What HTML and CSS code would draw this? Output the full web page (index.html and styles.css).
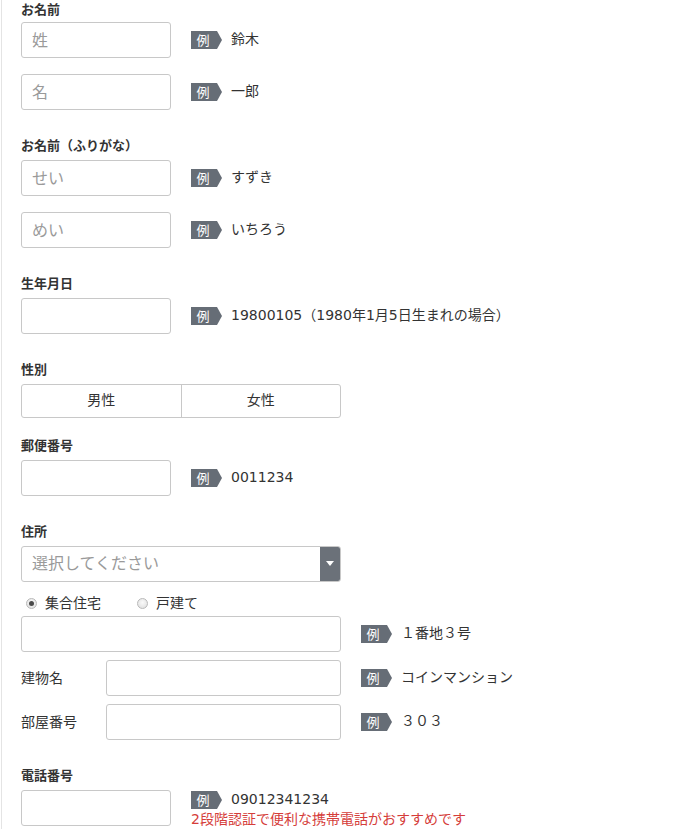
FILE: index.html
```html
<!DOCTYPE html>
<html lang="ja">
<head>
<meta charset="utf-8">
<link rel="stylesheet" href="styles.css">
</head>
<body>
<div class="page">
  <div class="group first">
    <div class="label">お名前</div>
    <div class="rows">
      <div class="row"><input class="field" placeholder="姓"><span class="ex">例</span><span class="hint">鈴木</span></div>
      <div class="row"><input class="field" placeholder="名"><span class="ex">例</span><span class="hint">一郎</span></div>
    </div>
  </div>
  <div class="group">
    <div class="label">お名前（ふりがな）</div>
    <div class="rows">
      <div class="row"><input class="field" placeholder="せい"><span class="ex">例</span><span class="hint">すずき</span></div>
      <div class="row"><input class="field" placeholder="めい"><span class="ex">例</span><span class="hint">いちろう</span></div>
    </div>
  </div>
  <div class="group">
    <div class="label">生年月日</div>
    <div class="row"><input class="field"><span class="ex">例</span><span class="hint">19800105（1980年1月5日生まれの場合）</span></div>
  </div>
  <div class="group gender">
    <div class="label">性別</div>
    <div class="seg"><span class="seg-btn">男性</span><span class="seg-btn">女性</span></div>
  </div>
  <div class="group">
    <div class="label">郵便番号</div>
    <div class="row"><input class="field"><span class="ex">例</span><span class="hint">0011234</span></div>
  </div>
  <div class="group">
    <div class="label">住所</div>
    <div class="select"><span class="select-text">選択してください</span><span class="select-arrow"></span></div>
    <div class="radios">
      <span class="radio checked"></span><span class="radio-text">集合住宅</span>
      <span class="radio"></span><span class="radio-text">戸建て</span>
    </div>
    <div class="rows tight">
      <div class="row"><input class="field wide"><span class="ex">例</span><span class="hint">１番地３号</span></div>
      <div class="row"><span class="sublabel">建物名</span><input class="field sub"><span class="ex">例</span><span class="hint">コインマンション</span></div>
      <div class="row"><span class="sublabel">部屋番号</span><input class="field sub"><span class="ex">例</span><span class="hint">３０３</span></div>
    </div>
  </div>
  <div class="group">
    <div class="label">電話番号</div>
    <div class="row top"><input class="field"><div class="hints"><div class="hint-line"><span class="ex">例</span><span class="hint">09012341234</span></div><div class="note">2段階認証で便利な携帯電話がおすすめです</div></div></div>
  </div>
</div>
</body>
</html>
```
FILE: styles.css
```css
html, body {
  margin: 0;
  padding: 0;
  background: #fff;
}
body {
  font-family: "Noto Sans CJK JP", "Noto Sans", sans-serif;
  color: #333;
  height: 829px;
  overflow: hidden;
}
.page {
  margin-left: 1px;
  border-left: 1px solid #e4e4e4;
  padding-left: 19px;
  padding-top: 1px;
  min-height: 829px;
}
.group {
  margin-bottom: 27px;
}
.group.gender {
  margin-bottom: 19px;
}
.label {
  font-size: 13px;
  font-weight: bold;
  line-height: 16px;
  height: 16px;
  margin-bottom: 7px;
  color: #333;
}
.first .label {
  margin-bottom: 5px;
}
.rows {
  display: flex;
  flex-direction: column;
  gap: 16px;
}
.rows.tight {
  gap: 8px;
}
.row {
  display: flex;
  align-items: center;
}
.row.top {
  align-items: flex-start;
}
.field {
  box-sizing: border-box;
  width: 150px;
  height: 36px;
  border: 1px solid #c8c8c8;
  border-radius: 3px;
  padding: 0 10px 2px;
  font-family: inherit;
  font-size: 16px;
  color: #333;
  background: #fff;
  outline: none;
  margin: 0;
  flex: none;
}
.field::placeholder {
  color: #9a9a9a;
}
.field.wide {
  width: 320px;
}
.field.sub {
  width: 235px;
}
.sublabel {
  width: 85px;
  font-size: 14px;
  line-height: 20px;
  padding-bottom: 3px;
  flex: none;
}
.ex {
  position: relative;
  flex: none;
  box-sizing: border-box;
  width: 26px;
  height: 18px;
  margin-left: 20px;
  margin-right: 14px;
  background: #666d76;
  color: #fff;
  font-size: 13px;
  line-height: 17px;
  text-align: center;
  padding-right: 2px;
}
.ex::after {
  content: "";
  position: absolute;
  left: 26px;
  top: 0;
  border-top: 9px solid transparent;
  border-bottom: 9px solid transparent;
  border-left: 5px solid #666d76;
}
.hint {
  font-family: "DejaVu Sans", "Noto Sans CJK JP", sans-serif;
  font-size: 14px;
  line-height: 20px;
  padding-bottom: 3px;
  color: #333;
  white-space: nowrap;
}
.hints {
  display: flex;
  flex-direction: column;
}
.hint-line {
  display: flex;
  align-items: center;
  height: 20px;
}
.hint-line .hint {
  padding-bottom: 2px;
}
.note {
  margin-left: 20px;
  font-family: "DejaVu Sans", "Noto Sans CJK JP", sans-serif;
  font-size: 14px;
  line-height: 18px;
  color: #d53d3a;
  white-space: nowrap;
}
.seg {
  display: flex;
  box-sizing: border-box;
  width: 320px;
  height: 34px;
  border: 1px solid #c8c8c8;
  border-radius: 3px;
}
.seg-btn {
  flex: 1;
  display: flex;
  align-items: center;
  justify-content: center;
  font-size: 14px;
  padding-bottom: 4px;
  color: #333;
}
.seg-btn + .seg-btn {
  border-left: 1px solid #c8c8c8;
}
.select {
  display: flex;
  box-sizing: border-box;
  width: 320px;
  height: 36px;
  border: 1px solid #c8c8c8;
  border-radius: 3px;
  overflow: hidden;
}
.select-text {
  flex: 1;
  display: flex;
  align-items: center;
  padding-left: 10px;
  padding-bottom: 4px;
  font-size: 16px;
  color: #9a9a9a;
}
.select-arrow {
  position: relative;
  width: 20px;
  background: #6b7179;
}
.select-arrow::after {
  content: "";
  position: absolute;
  left: 6px;
  top: 14px;
  border-left: 4px solid transparent;
  border-right: 4px solid transparent;
  border-top: 5px solid #fff;
}
.radios {
  display: flex;
  align-items: center;
  height: 20px;
  margin-top: 11px;
  margin-bottom: 3px;
  padding-left: 5px;
}
.radio {
  box-sizing: border-box;
  width: 11px;
  height: 11px;
  border-radius: 50%;
  border: 1px solid #b9b9b9;
  background: radial-gradient(circle at 50% 40%, #fafafa, #dcdcdc);
  margin-right: 8px;
  position: relative;
  flex: none;
}
.radio.checked::after {
  content: "";
  position: absolute;
  left: 2px;
  top: 2px;
  width: 5px;
  height: 5px;
  border-radius: 50%;
  background: #4a4a4a;
}
.radio-text {
  font-size: 14px;
  line-height: 20px;
  padding-bottom: 2px;
  margin-right: 36px;
}
```
